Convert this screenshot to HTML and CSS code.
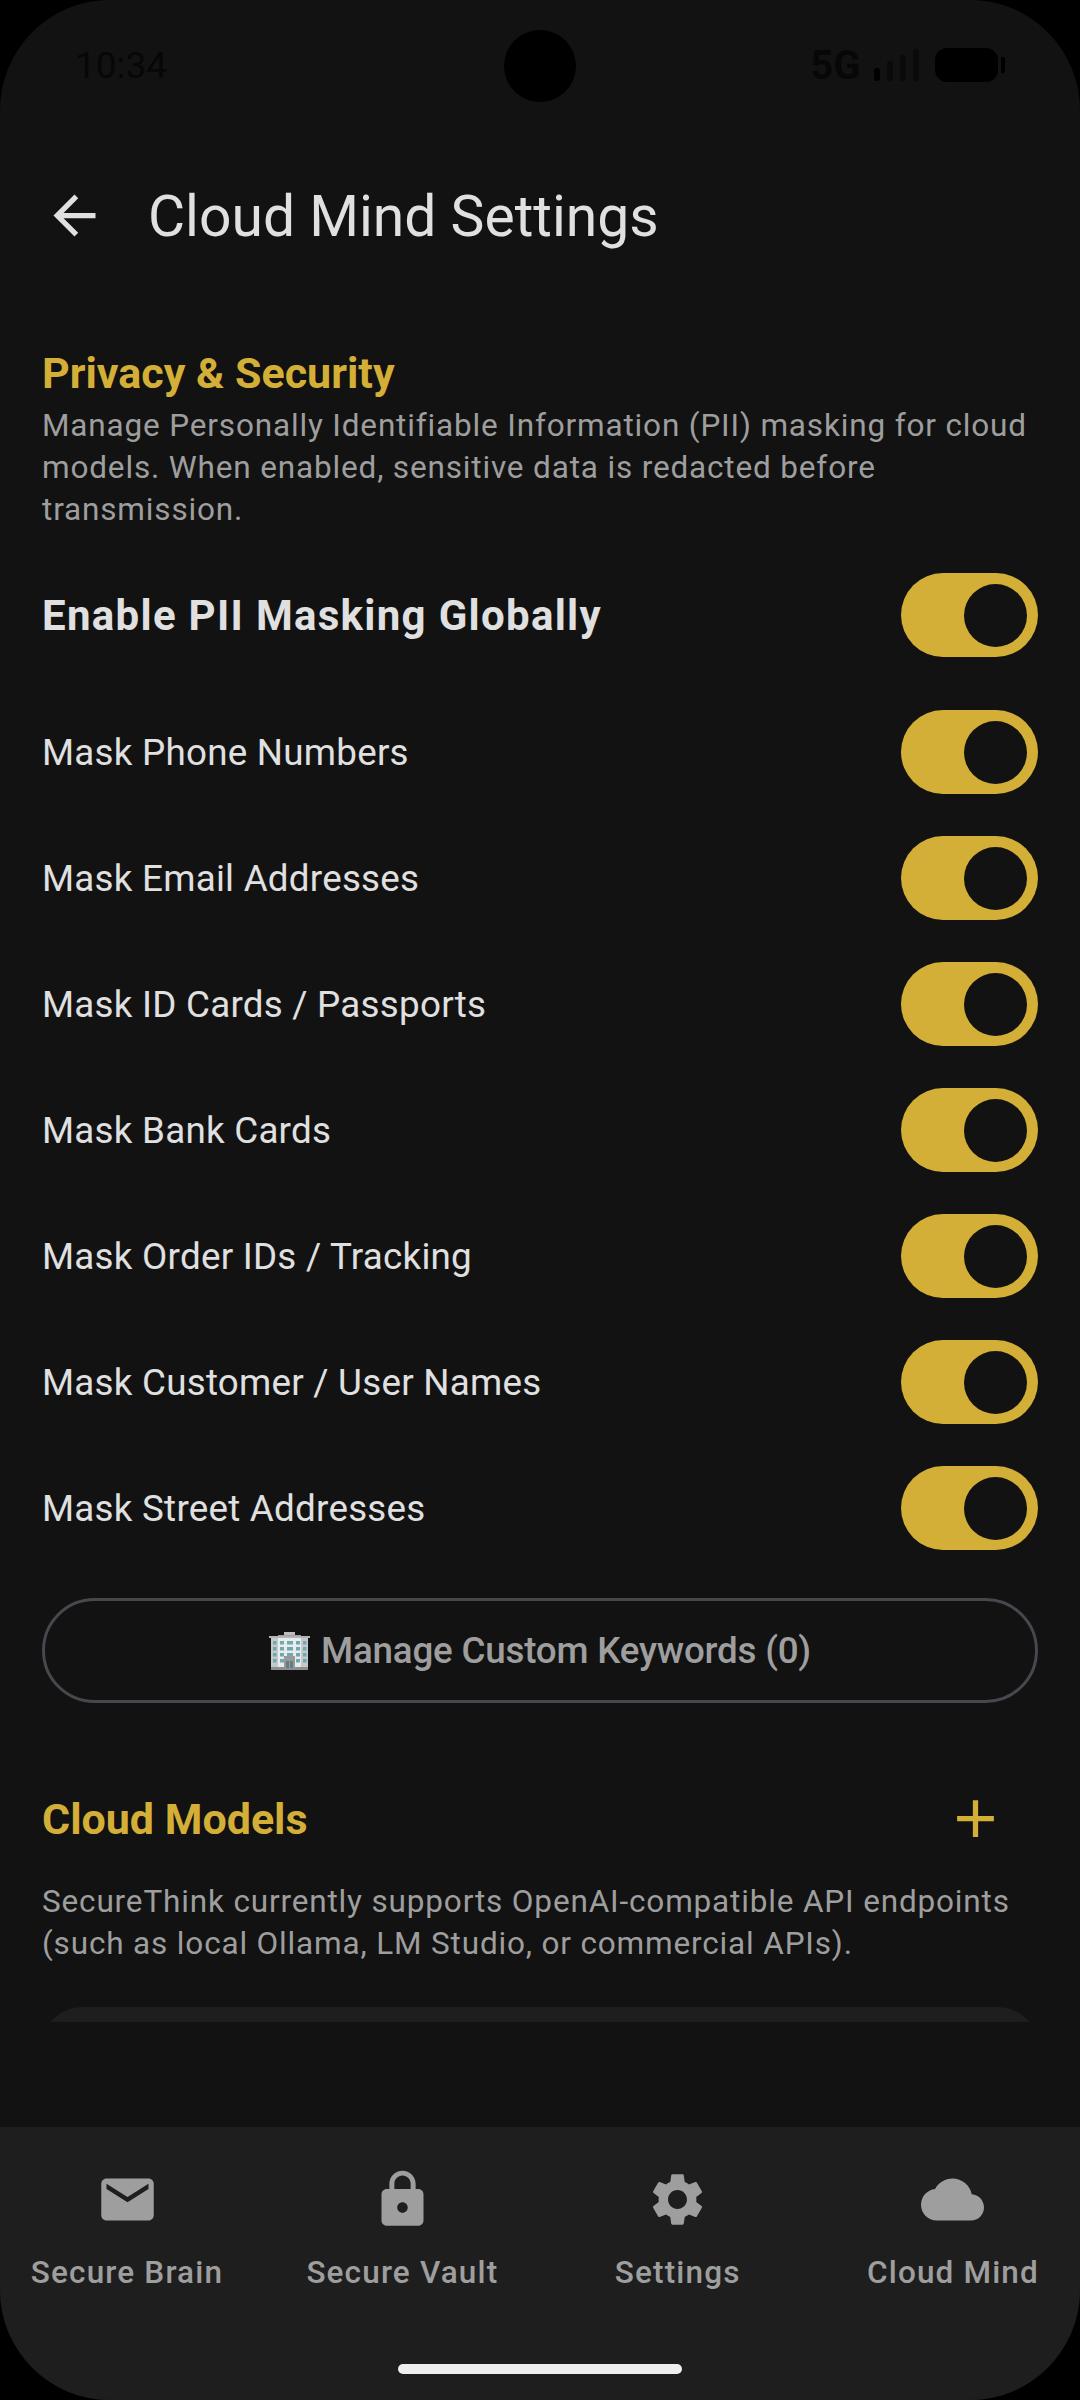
FILE: index.html
```html
<!DOCTYPE html>
<html lang="en">
  <head>
    <meta charset="utf-8" />
    <meta name="viewport" content="width=device-width, initial-scale=1.0" />
    <title>Cloud Mind Settings</title>
    <link rel="stylesheet" href="styles.css">
  </head>

  <body>
    <div class="phone">
      <div class="camera"></div>

      <div class="status">
        <span class="time">10:34</span>
        <div class="status-icons">
          <span class="network">5G</span>
          <div class="signal">
            <i class="bar bar-1"></i>
            <i class="bar bar-2"></i>
            <i class="bar bar-3"></i>
            <i class="bar bar-4"></i>
          </div>
          <div class="battery"></div>
          <div class="battery-cap"></div>
        </div>
      </div>

      <header class="appbar">
        <svg class="back" viewBox="0 0 24 24"><path d="M20 11H7.83l5.59-5.59L12 4l-8 8 8 8 1.41-1.41L7.83 13H20v-2z"/></svg>
        <h1>Cloud Mind Settings</h1>
      </header>

      <main class="content">
        <h2 class="section-title">Privacy &amp; Security</h2>
        <p class="desc">Manage Personally Identifiable Information (PII) masking for cloud models. When enabled, sensitive data is redacted before transmission.</p>

        <div class="row row-master">
          <span>Enable PII Masking Globally</span>
          <div class="switch"><i></i></div>
        </div>

        <div class="rows">
          <div class="row"><span>Mask Phone Numbers</span><div class="switch"><i></i></div></div>
          <div class="row"><span>Mask Email Addresses</span><div class="switch"><i></i></div></div>
          <div class="row"><span>Mask ID Cards / Passports</span><div class="switch"><i></i></div></div>
          <div class="row"><span>Mask Bank Cards</span><div class="switch"><i></i></div></div>
          <div class="row"><span>Mask Order IDs / Tracking</span><div class="switch"><i></i></div></div>
          <div class="row"><span>Mask Customer / User Names</span><div class="switch"><i></i></div></div>
          <div class="row"><span>Mask Street Addresses</span><div class="switch"><i></i></div></div>
        </div>

        <button class="keywords">
          <svg class="building" viewBox="0 0 41 38">
            <rect x="15" y="0" width="11" height="4" fill="#bdbdbd"/>
            <rect x="9" y="3" width="23" height="3" fill="#9e9e9e"/>
            <rect x="0" y="4" width="41" height="2" fill="#b4b4b4"/>
            <rect x="2" y="6" width="37" height="30" fill="#c4c9ca"/>
            <rect x="9" y="6" width="23" height="30" fill="#e8ecec"/>
            <rect x="2" y="35" width="37" height="3" fill="#8f8f8f"/>
            <g fill="#6fa8b0">
              <rect x="4" y="9" width="3.500" height="3.500"/><rect x="4" y="15" width="3.500" height="3.500"/><rect x="4" y="21" width="3.500" height="3.500"/><rect x="4" y="27" width="3.500" height="3.500"/>
              <rect x="11" y="9" width="4" height="3.500"/><rect x="11" y="15" width="4" height="3.500"/><rect x="11" y="21" width="4" height="3.500"/><rect x="11" y="27" width="4" height="3.500"/>
              <rect x="18" y="9" width="6" height="3.500"/><rect x="18" y="15" width="6" height="3.500"/><rect x="18" y="21" width="6" height="3.500"/>
              <rect x="27" y="9" width="4" height="3.500"/><rect x="27" y="15" width="4" height="3.500"/><rect x="27" y="21" width="4" height="3.500"/><rect x="27" y="27" width="4" height="3.500"/>
              <rect x="34" y="9" width="3.500" height="3.500"/><rect x="34" y="15" width="3.500" height="3.500"/><rect x="34" y="21" width="3.500" height="3.500"/><rect x="34" y="27" width="3.500" height="3.500"/>
            </g>
            <rect x="15" y="24" width="11" height="12" fill="#9a9a9a"/>
            <rect x="17" y="29" width="3" height="7" fill="#5f7f88"/>
            <rect x="21" y="29" width="3" height="7" fill="#5f7f88"/>
          </svg>
          <span>Manage Custom Keywords (0)</span>
        </button>

        <div class="models-head">
          <h2 class="section-title">Cloud Models</h2>
          <svg class="add" viewBox="0 0 24 24"><path d="M19 13h-6v6h-2v-6H5v-2h6V5h2v6h6v2z"/></svg>
        </div>
        <p class="desc desc-models">SecureThink currently supports OpenAI-compatible API endpoints (such as local Ollama, LM Studio, or commercial APIs).</p>

        <div class="model-card"></div>
      </main>

      <nav class="nav">
        <div class="nav-item">
          <svg viewBox="0 0 24 24"><path d="M20 4H4c-1.100 0-1.990.9-1.990 2L2 18c0 1.100.9 2 2 2h16c1.100 0 2-.9 2-2V6c0-1.100-.9-2-2-2zm0 4l-8 5-8-5V6l8 5 8-5v2z"/></svg>
          <span>Secure Brain</span>
        </div>
        <div class="nav-item">
          <svg viewBox="0 0 24 24"><path d="M18 8h-1V6c0-2.760-2.240-5-5-5S7 3.240 7 6v2H6c-1.100 0-2 .9-2 2v10c0 1.100.9 2 2 2h12c1.100 0 2-.9 2-2V10c0-1.100-.9-2-2-2zm-6 9c-1.100 0-2-.9-2-2s.9-2 2-2 2 .9 2 2-.9 2-2 2zm3.100-9H8.900V6c0-1.710 1.390-3.100 3.100-3.100 1.710 0 3.100 1.390 3.100 3.100v2z"/></svg>
          <span>Secure Vault</span>
        </div>
        <div class="nav-item">
          <svg viewBox="0 0 24 24"><path d="M19.140 12.940c.04-.3.06-.61.06-.94 0-.32-.02-.64-.07-.94l2.030-1.580c.18-.14.23-.41.12-.61l-1.920-3.320c-.12-.22-.37-.29-.59-.22l-2.390.96c-.5-.38-1.030-.7-1.620-.94l-.36-2.540c-.04-.24-.24-.41-.48-.41h-3.840c-.24 0-.43.17-.47.41l-.36 2.540c-.59.24-1.130.57-1.620.94l-2.390-.96c-.22-.08-.47 0-.59.22L2.740 8.870c-.12.21-.08.47.12.61l2.030 1.580c-.05.3-.09.63-.09.94s.02.64.07.94l-2.030 1.580c-.18.14-.23.41-.12.61l1.920 3.320c.12.22.37.29.59.22l2.390-.96c.5.38 1.030.7 1.620.94l.36 2.540c.05.24.24.41.48.41h3.840c.24 0 .44-.17.47-.41l.36-2.540c.59-.24 1.130-.56 1.620-.94l2.390.96c.22.08.47 0 .59-.22l1.920-3.320c.12-.22.07-.47-.12-.61l-2.010-1.580zM12 15.600c-1.980 0-3.600-1.620-3.600-3.600s1.620-3.600 3.600-3.600 3.600 1.620 3.600 3.600-1.620 3.600-3.600 3.600z"/></svg>
          <span>Settings</span>
        </div>
        <div class="nav-item">
          <svg viewBox="0 0 24 24"><path d="M19.350 10.040C18.670 6.590 15.640 4 12 4 9.110 4 6.600 5.640 5.350 8.040 2.340 8.360 0 10.910 0 14c0 3.310 2.690 6 6 6h13c2.760 0 5-2.240 5-5 0-2.640-2.050-4.780-4.650-4.960z"/></svg>
          <span>Cloud Mind</span>
        </div>
        <div class="home-bar"></div>
      </nav>
    </div>
  </body>
</html>
```

FILE: styles.css
```css
* {
  box-sizing: border-box;
}

html,
body {
  margin: 0;
  background: #000;
}

body {
  font-family: Roboto, "Noto Sans", sans-serif;
}

.phone {
  position: relative;
  display: flex;
  flex-direction: column;
  width: 1080px;
  height: 2400px;
  overflow: hidden;
  background: #121212;
  border-radius: 110px;
}

.camera {
  position: absolute;
  top: 30px;
  left: 504px;
  width: 72px;
  height: 72px;
  background: #000;
  border-radius: 50%;
}

/* status bar, nearly invisible in the reference */
.status {
  display: flex;
  flex: none;
  align-items: center;
  justify-content: space-between;
  height: 142px;
  padding: 0 75px 12px 75px;
  color: #070707;
}

.time {
  font-size: 37px;
}

.status-icons {
  display: flex;
  align-items: center;
}

.network {
  margin-right: 13px;
  font-size: 40px;
  font-weight: 700;
}

.signal {
  display: flex;
  gap: 6.500px;
  align-items: flex-end;
  height: 32px;
  margin-right: 16px;
}

.bar {
  width: 6.500px;
  background: #0a0a0a;
  border-radius: 3px;
}

.bar-1 {
  height: 13px;
  background: #000;
}

.bar-2 {
  height: 20px;
}

.bar-3 {
  height: 26px;
}

.bar-4 {
  height: 32px;
}

.battery {
  width: 63px;
  height: 34px;
  background: #000;
  border-radius: 12px;
}

.battery-cap {
  width: 4px;
  height: 16px;
  margin-left: 3px;
  background: #000;
  border-radius: 0 2px 2px 0;
}

.appbar {
  display: flex;
  flex: none;
  align-items: center;
  height: 147px;
  padding-left: 43px;
}

.back {
  width: 63px;
  height: 63px;
  margin-right: 42px;
  fill: #e0e0e0;
}

h1 {
  margin: 2px 0 0;
  font-size: 57px;
  font-weight: 400;
  color: #e0e0e0;
}

.content {
  flex: none;
  height: 1733px;
  padding: 59px 42px 0;
  overflow: hidden;
}

.section-title {
  margin: 0;
  font-size: 43px;
  font-weight: 700;
  line-height: 50px;
  color: #d4af37;
}

.desc {
  margin: 7px 0 0;
  font-size: 31.500px;
  line-height: 42px;
  letter-spacing: 0.840px;
  color: #9e9e9e;
}

.row {
  display: flex;
  align-items: center;
  justify-content: space-between;
  height: 126px;
  font-size: 36.750px;
  letter-spacing: 0.250px;
  color: #e0e0e0;
}

.row-master {
  height: 84px;
  margin: 42px 0 32px;
  font-size: 42px;
  font-weight: 700;
  letter-spacing: 1.300px;
}

.switch {
  display: flex;
  align-items: center;
  justify-content: flex-end;
  width: 137px;
  height: 84px;
  padding-right: 11px;
  background: #d4af37;
  border-radius: 42px;
}

.switch i {
  width: 63px;
  height: 63px;
  background: #121212;
  border-radius: 50%;
}

.keywords {
  display: flex;
  gap: 11px;
  align-items: center;
  justify-content: center;
  width: 100%;
  height: 105px;
  padding: 0;
  margin-top: 27px;
  font-family: inherit;
  font-size: 36.750px;
  font-weight: 500;
  letter-spacing: -0.200px;
  color: #9e9e9e;
  background: none;
  border: 3px solid #49474e;
  border-radius: 53px;
}

.building {
  width: 41px;
  height: 38px;
}

.models-head {
  display: flex;
  align-items: center;
  justify-content: space-between;
  height: 126px;
  padding-top: 2px;
  margin-top: 52px;
}

.add {
  width: 63px;
  height: 63px;
  margin-top: -2px;
  margin-right: 31px;
  fill: #d4af37;
}

.desc-models {
  margin-top: 0;
}

.model-card {
  height: 80px;
  margin-top: 42px;
  background: #1e1e1e;
  border-radius: 42px;
}

.nav {
  position: relative;
  display: flex;
  flex: 1;
  justify-content: space-between;
  padding: 41px 17px 0;
  margin-top: 105px;
  background: #1e1e1e;
}

.nav-item {
  display: flex;
  flex-direction: column;
  align-items: center;
  width: 220px;
  font-size: 31.500px;
  font-weight: 500;
  letter-spacing: 1.150px;
  color: #9e9e9e;
}

.nav-item svg {
  width: 63px;
  height: 63px;
  margin-bottom: 23px;
  fill: #9e9e9e;
}

.home-bar {
  position: absolute;
  bottom: 26px;
  left: 398px;
  width: 284px;
  height: 10px;
  background: #eee;
  border-radius: 5px;
}
```
